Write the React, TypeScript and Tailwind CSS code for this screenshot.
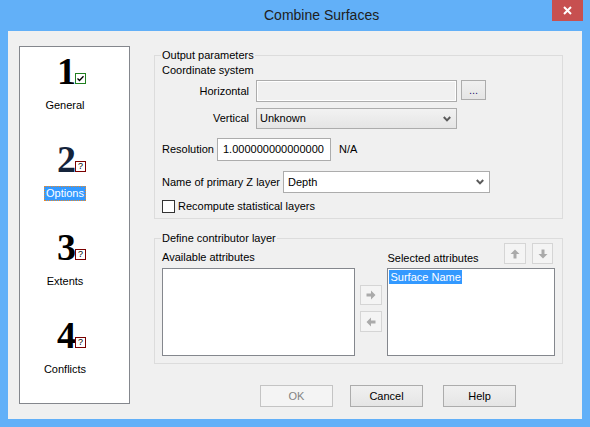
import type { ReactNode } from "react";

const ui = "font-['Segoe_UI','Liberation_Sans',Arial,sans-serif] text-[11px] leading-[15px] text-black";

// Small glyphs used by the wizard steps and the combo boxes.
function Chevron() {
  return (
    <svg width="8" height="6" viewBox="0 0 8 6" className="shrink-0">
      <polyline points="0.8,1 4,4.4 7.2,1" fill="none" stroke="#5a5a5a" strokeWidth="2" />
    </svg>
  );
}

function Arrow({ dir }: { dir: "up" | "down" | "left" | "right" }) {
  const rot = { right: 0, down: 90, left: 180, up: 270 }[dir];
  return (
    <svg width="10" height="10" viewBox="0 0 10 10" style={{ transform: `rotate(${rot}deg)` }}>
      <path d="M0.5 3.5h4.5V0.5l4.5 4.5-4.5 4.5V6.5H0.5z" fill="#aaaaaa" />
    </svg>
  );
}

function Hecho() {
  return (
    <svg width="11" height="11" viewBox="0 0 11 11" className="shrink-0">
      <rect x="0.5" y="0.5" width="10" height="10" fill="#fff" stroke="#1f7f1f" />
      <polyline points="2.5,5.5 4.5,7.5 8.5,3.2" fill="none" stroke="#000" strokeWidth="1.3" />
    </svg>
  );
}

function Pendiente() {
  return (
    <span className="flex h-[11px] w-[11px] shrink-0 items-center justify-center border border-[#7a0000] bg-white font-['Liberation_Sans',sans-serif] text-[9px] leading-[9px] text-black">
      ?
    </span>
  );
}

function Paso({
  n,
  label,
  done,
  active,
  dark,
}: {
  n: string;
  label: string;
  done?: boolean;
  active?: boolean;
  dark?: boolean;
}) {
  return (
    <div className="flex h-[88px] flex-col">
      <div className="flex h-[26px] items-end pl-[37px]">
        <span
          className={`block w-[17px] text-right font-['Liberation_Serif',serif] text-[38px] font-bold leading-[26px] ${
            dark ? "text-[#15243b]" : "text-black"
          }`}
        >
          {n}
        </span>
        <span className="ml-[1px]">{done ? <Hecho /> : <Pendiente />}</span>
      </div>
      <div className="ml-[10px] mt-[13px] w-[70px] text-center leading-[16px]">
        {active ? (
          <span className="inline-block border border-dotted border-[#e8892a] bg-[#3399ff] px-[1px] leading-[13px] text-white">
            {label}
          </span>
        ) : (
          label
        )}
      </div>
    </div>
  );
}

function Grupo({ titulo, className, children }: { titulo: string; className?: string; children: ReactNode }) {
  return (
    <div className={`relative border border-[#dcdcdc] ${className ?? ""}`}>
      <span className="absolute -top-[8px] left-[6px] bg-[#f0f0f0] px-[1px]">{titulo}</span>
      {children}
    </div>
  );
}

function Boton({ children, disabled, className }: { children: ReactNode; disabled?: boolean; className?: string }) {
  return (
    <div
      className={`flex items-center justify-center border ${
        disabled
          ? "border-[#c4c4c4] bg-[#f4f4f4] text-[#838383]"
          : "border-[#acacac] bg-gradient-to-b from-[#f0f0f0] to-[#e5e5e5]"
      } ${className ?? ""}`}
    >
      {children}
    </div>
  );
}

export default function App() {
  return (
    <div className={`flex h-[427px] w-[590px] flex-col bg-[#62b0f8] ${ui}`}>
      {/* barra de título */}
      <div className="flex h-[31px] shrink-0 items-start">
        <span className="ml-[264px] mt-[7px] font-['Segoe_UI','Liberation_Sans',sans-serif] text-[14px] leading-[17px] text-[#202020]">
          Combine Surfaces
        </span>
        <div className="ml-auto mr-[7px] flex h-[21px] w-[31px] items-center justify-center bg-[#c75050]">
          <svg width="9" height="9" viewBox="0 0 9 9">
            <path d="M1 1l7 7M8 1l-7 7" stroke="#fff" strokeWidth="2" />
          </svg>
        </div>
      </div>

      <div className="mx-[8px] flex h-[388px] bg-[#f0f0f0] pl-[11px] pt-[15px]">
        {/* pasos del asistente */}
        <div className="h-[358px] w-[111px] shrink-0 border border-[#84878d] bg-white pt-[11px]">
          <Paso n="1" label="General" done />
          <Paso n="2" label="Options" active dark />
          <Paso n="3" label="Extents" />
          <Paso n="4" label="Conflicts" />
        </div>

        <div className="ml-[24px] mt-[9px] flex w-[409px] flex-col">
          <Grupo titulo="Output parameters" className="px-[7px] pb-[5px] pt-[7px]">
            <div>Coordinate system</div>

            <div className="mt-[2px] flex h-[22px] items-center">
              <span className="w-[87px] text-right">Horizontal</span>
              <div className="ml-[7px] h-[22px] w-[201px] border border-[#acacac] bg-[#f0f0f0] shadow-[inset_0_0_0_1px_#ffffff]" />
              <Boton className="-mt-[3px] ml-[4px] h-[20px] w-[25px] text-[#2a1470]">
                <span className="mt-[2px]">...</span>
              </Boton>
            </div>

            <div className="mt-[6px] flex h-[21px] items-center">
              <span className="w-[87px] text-right">Vertical</span>
              <div className="ml-[7px] flex h-[21px] w-[201px] items-center border border-[#acacac] bg-gradient-to-b from-[#f2f2f2] to-[#e5e5e5] pl-[3px] pr-[5px]">
                <span className="flex-1">Unknown</span>
                <Chevron />
              </div>
            </div>

            <div className="mt-[9px] flex h-[23px] items-center">
              <span className="w-[55px]">Resolution</span>
              <div className="flex h-[23px] w-[114px] items-center border border-[#acacac] bg-white pl-[5px]">
                1.000000000000000
              </div>
              <span className="ml-[8px]">N/A</span>
            </div>

            <div className="mt-[10px] flex h-[22px] items-center">
              <span className="w-[121px]">Name of primary Z layer</span>
              <div className="flex h-[22px] w-[207px] items-center border border-[#acacac] bg-white pl-[4px] pr-[5px]">
                <span className="flex-1">Depth</span>
                <Chevron />
              </div>
            </div>

            <div className="mt-[7px] flex h-[13px] items-center">
              <span className="h-[13px] w-[13px] border border-[#333] bg-white" />
              <span className="ml-[3px]">Recompute statistical layers</span>
            </div>
          </Grupo>

          <Grupo titulo="Define contributor layer" className="mt-[19px] flex px-[7px] pb-[7px] pt-[4px]">
            <div className="w-[194px]">
              <div className="flex h-[22px] items-end">Available attributes</div>
              <div className="mt-[3px] h-[88px] border border-[#84878d] bg-white" />
            </div>

            <div className="ml-[5px] flex w-[22px] flex-col pt-[42px]">
              <Boton disabled className="h-[20px] w-[22px] border-[#d5d5d5]">
                <Arrow dir="right" />
              </Boton>
              <Boton disabled className="mt-[6px] h-[21px] w-[22px] border-[#d5d5d5]">
                <Arrow dir="left" />
              </Boton>
            </div>

            <div className="ml-[5px] w-[168px]">
              <div className="flex h-[22px] items-end">
                <span className="translate-y-[1px]">Selected attributes</span>
                <Boton disabled className="mb-[1px] ml-auto h-[21px] w-[22px] self-start border-[#d5d5d5]">
                  <Arrow dir="up" />
                </Boton>
                <Boton disabled className="mb-[1px] ml-[6px] mr-[2px] h-[21px] w-[21px] self-start border-[#d5d5d5]">
                  <Arrow dir="down" />
                </Boton>
              </div>
              <div className="mt-[3px] h-[88px] border border-[#84878d] bg-white p-[1px]">
                <span className="inline-block bg-[#3399ff] px-[1px] leading-[14px] text-white">Surface Name</span>
              </div>
            </div>
          </Grupo>

          <div className="ml-[106px] mt-[21px] flex">
            <Boton disabled className="h-[22px] w-[73px]">OK</Boton>
            <Boton className="ml-[17px] h-[22px] w-[73px]">Cancel</Boton>
            <Boton className="ml-[20px] h-[22px] w-[73px]">Help</Boton>
          </div>
        </div>
      </div>
    </div>
  );
}
